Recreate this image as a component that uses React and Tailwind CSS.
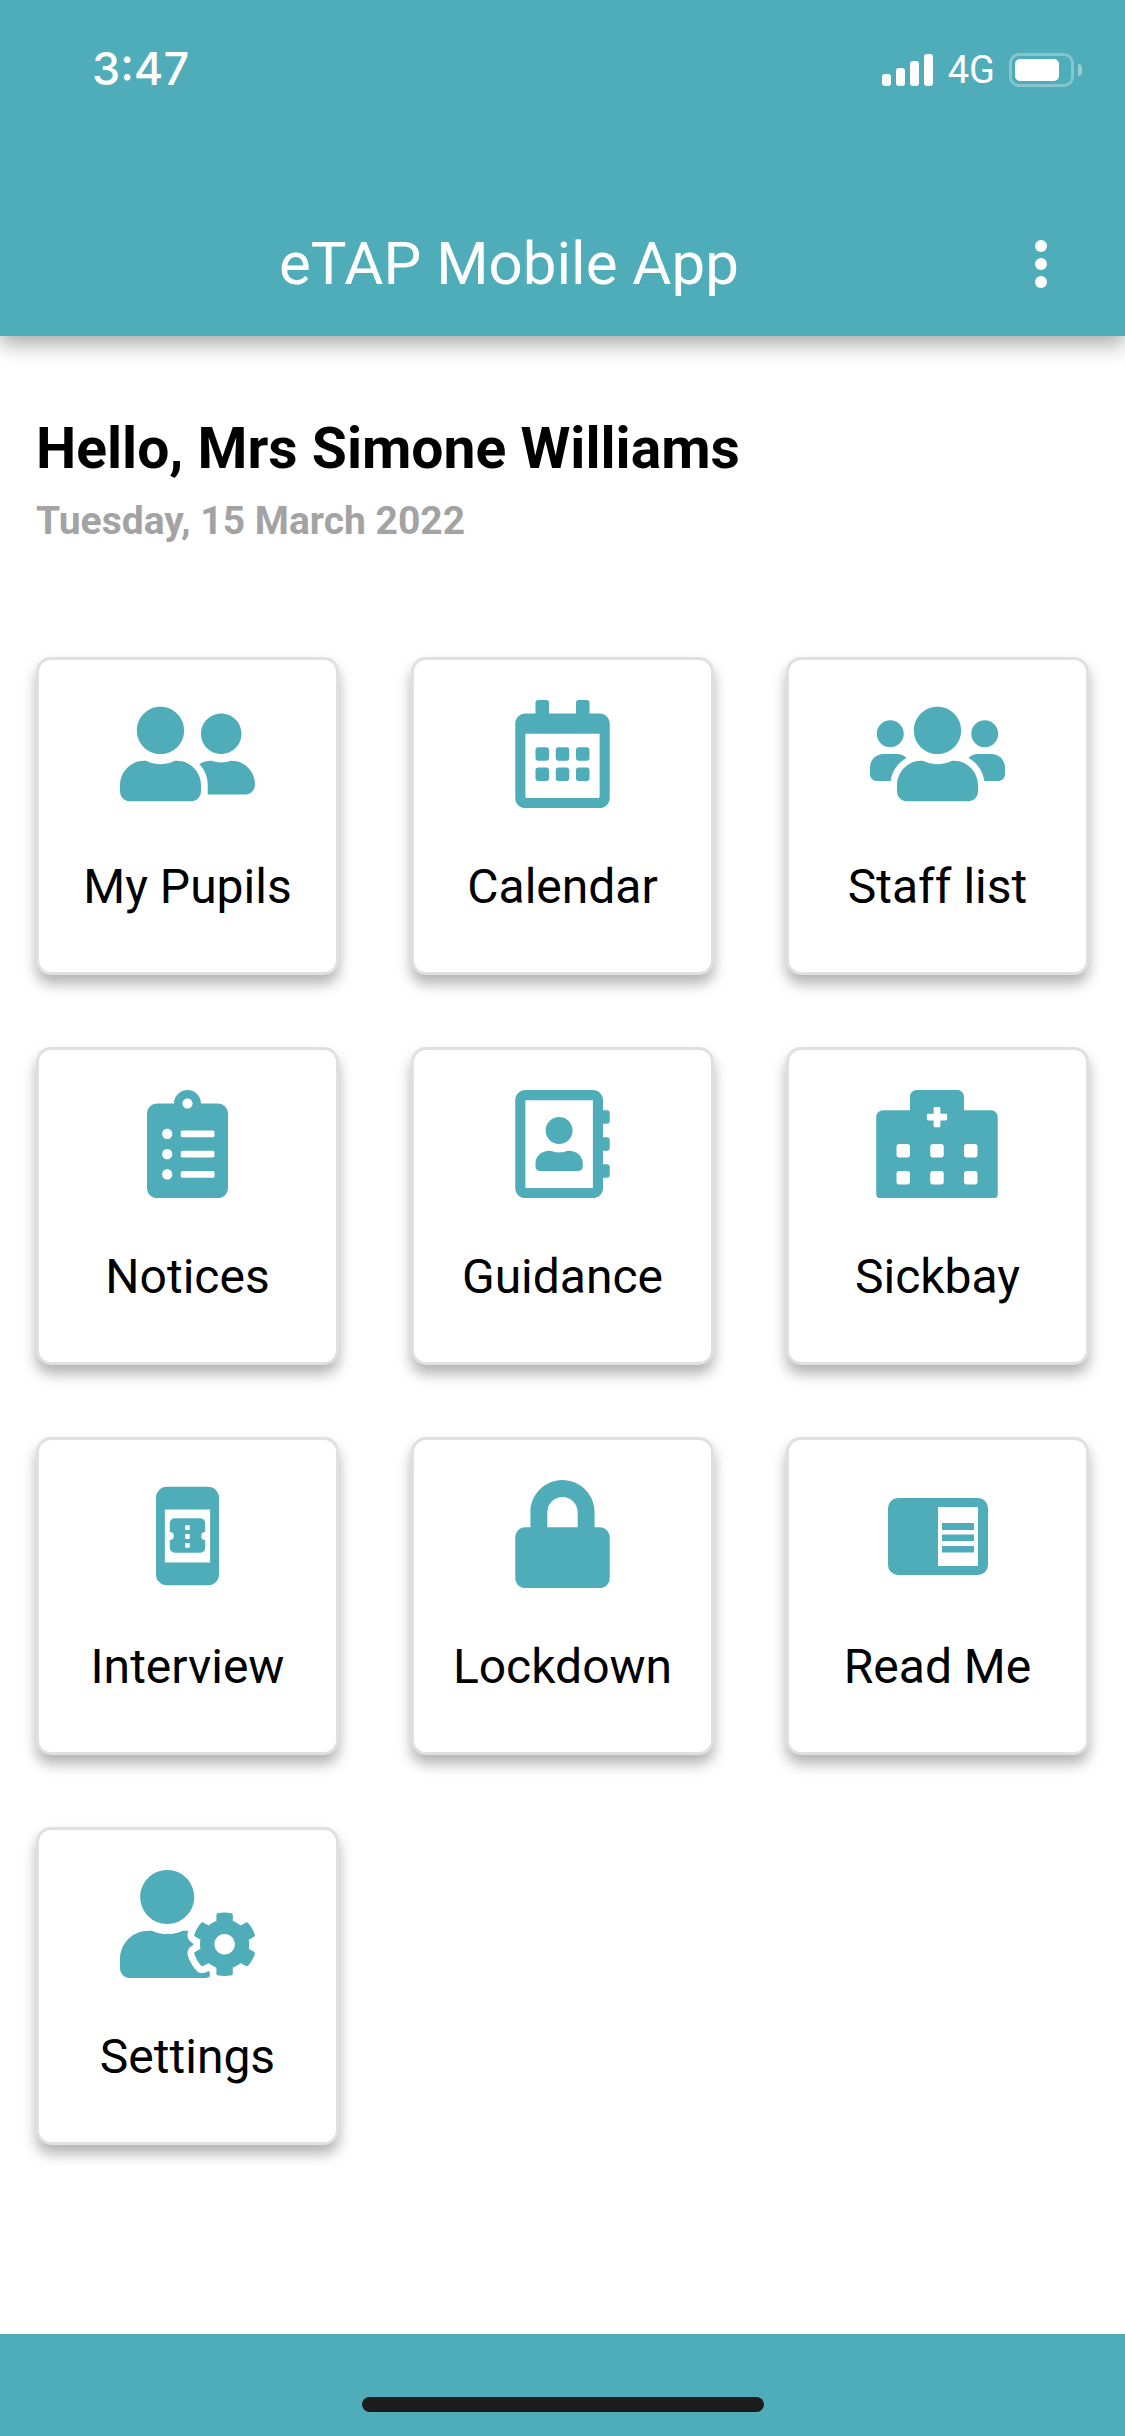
import React from "react";
import {
  FaUserFriends,
  FaRegCalendarAlt,
  FaUsers,
  FaClipboardList,
  FaRegAddressBook,
  FaHospitalAlt,
  FaLock,
  FaUserCog,
} from "react-icons/fa";

function InterviewIcon() {
  return (
    <svg viewBox="0 0 64 100" className="mt-[4px] h-[100px] w-[63px]" fill="currentColor">
      <path
        fillRule="evenodd"
        d="M11 0h42a11 11 0 0 1 11 11v78a11 11 0 0 1-11 11H11A11 11 0 0 1 0 89V11A11 11 0 0 1 11 0zM9 23v54h46V23z"
      />
      <path
        fillRule="evenodd"
        d="M19 32h26a5 5 0 0 1 5 5v9a4 4 0 0 0 0 8v8a5 5 0 0 1-5 5H19a5 5 0 0 1-5-5v-8a4 4 0 0 0 0-8v-9a5 5 0 0 1 5-5zM29.7 39v5h4.6v-5zM29.7 48v5h4.6v-5zM29.7 57v5h4.6v-5z"
      />
    </svg>
  );
}

function ReadMeIcon() {
  return (
    <svg viewBox="0 0 100 77" className="mt-[5px] h-[77px] w-[100px]" fill="currentColor">
      <path
        fillRule="evenodd"
        d="M10 0h80a10 10 0 0 1 10 10v57a10 10 0 0 1-10 10H10A10 10 0 0 1 0 67V10A10 10 0 0 1 10 0zM50 9v59h40V9zM54 25v7h32v-7zM54 36.500v6.500h32v-6.500zM54 48v6.500h32V48z"
      />
    </svg>
  );
}

const tiles = [
  { label: "My Pupils", icon: <FaUserFriends className="h-[108px] w-[135px]" /> },
  { label: "Calendar", icon: <FaRegCalendarAlt className="h-[108px] w-[95px]" /> },
  { label: "Staff list", icon: <FaUsers className="h-[108px] w-[135px]" /> },
  { label: "Notices", icon: <FaClipboardList className="h-[108px] w-[81px]" /> },
  { label: "Guidance", icon: <FaRegAddressBook className="h-[108px] w-[95px]" /> },
  { label: "Sickbay", icon: <FaHospitalAlt className="mr-[2px] h-[108px] w-[122px]" /> },
  { label: "Interview", icon: <InterviewIcon /> },
  { label: "Lockdown", icon: <FaLock className="h-[108px] w-[95px]" /> },
  { label: "Read Me", icon: <ReadMeIcon /> },
  { label: "Settings", icon: <FaUserCog className="h-[108px] w-[135px]" /> },
];

function StatusBar() {
  return (
    <div className="flex h-[136px] items-start justify-between pl-[92px] pr-[43px] pt-[45px] text-white">
      <span className="font-['Inter',sans-serif] text-[45px] font-medium leading-[48px]">3:47</span>
      <div className="flex items-center pt-[8px]">
        <div className="flex h-[32px] items-end gap-[5px]">
          <div className="h-[12px] w-[9px] rounded-[3px] bg-white" />
          <div className="h-[18px] w-[9px] rounded-[3px] bg-white" />
          <div className="h-[25px] w-[9px] rounded-[3px] bg-white" />
          <div className="h-[32px] w-[9px] rounded-[3px] bg-white" />
        </div>
        <span className="ml-[15px] font-['Roboto',sans-serif] text-[38px] leading-[34px]">4G</span>
        <div className="ml-[14px] flex h-[34px] w-[65px] items-center rounded-[10px] border-[3px] border-white/30 pl-[3px]">
          <div className="h-[22px] w-[44px] rounded-[5px] bg-white" />
        </div>
        <div className="ml-[4px] h-[12px] w-[4px] rounded-r-full bg-white/40" />
      </div>
    </div>
  );
}

function Tile({ label, icon }) {
  return (
    <div className="flex h-[318px] flex-col items-center rounded-[15px] border-[3px] border-[#e0e0e0] bg-white pt-[40px] shadow-[0_9px_14px_rgba(0,0,0,0.3)]">
      <div className="flex h-[108px] items-center justify-center text-[#4fadb9]">{icon}</div>
      <div className="mt-[51px] font-['Roboto',sans-serif] text-[48px] leading-[56px] text-black">{label}</div>
    </div>
  );
}

export default function App() {
  return (
    <div className="flex h-[2436px] w-[1125px] flex-col overflow-hidden bg-white font-['Roboto',sans-serif]">
      <header className="relative z-10 h-[336px] bg-[#4fadb9] shadow-[0_8px_20px_rgba(0,0,0,0.35)]">
        <StatusBar />
        <div className="mt-[72px] flex h-[112px] items-center justify-between pl-[279px] pr-[78px]">
          <h1 className="text-[60px] font-normal leading-[72px] text-white">eTAP Mobile App</h1>
          <div className="flex flex-col gap-[6px]">
            <div className="h-[12px] w-[12px] rounded-full bg-white" />
            <div className="h-[12px] w-[12px] rounded-full bg-white" />
            <div className="h-[12px] w-[12px] rounded-full bg-white" />
          </div>
        </div>
      </header>

      <main className="flex-1 px-[36px] pt-[81px]">
        <h2 className="text-[57px] font-bold leading-[64px] text-black">Hello, Mrs Simone Williams</h2>
        <p className="mt-[17px] text-[39px] font-bold leading-[46px] text-[#a3a3a3]">Tuesday, 15 March 2022</p>
        <div className="mt-[113px] grid grid-cols-3 gap-[72px]">
          {tiles.map((t) => (
            <Tile key={t.label} label={t.label} icon={t.icon} />
          ))}
        </div>
      </main>

      <footer className="flex h-[102px] items-end justify-center bg-[#4fadb9] pb-[24px]">
        <div className="h-[15px] w-[402px] rounded-full bg-[#1c1c1c]" />
      </footer>
    </div>
  );
}
